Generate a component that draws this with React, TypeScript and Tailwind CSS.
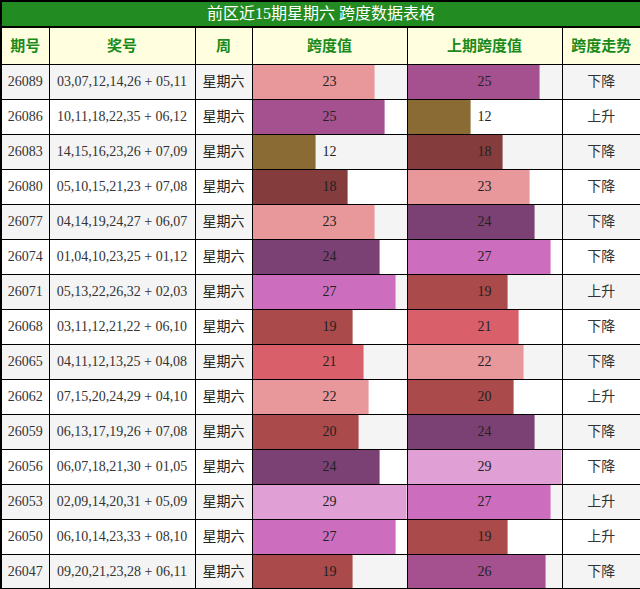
import React from "react";

const rows: [string, string, number, number, string][] = [
  ["26089", "03,07,12,14,26 + 05,11", 23, 25, "下降"],
  ["26086", "10,11,18,22,35 + 06,12", 25, 12, "上升"],
  ["26083", "14,15,16,23,26 + 07,09", 12, 18, "下降"],
  ["26080", "05,10,15,21,23 + 07,08", 18, 23, "下降"],
  ["26077", "04,14,19,24,27 + 06,07", 23, 24, "下降"],
  ["26074", "01,04,10,23,25 + 01,12", 24, 27, "下降"],
  ["26071", "05,13,22,26,32 + 02,03", 27, 19, "上升"],
  ["26068", "03,11,12,21,22 + 06,10", 19, 21, "下降"],
  ["26065", "04,11,12,13,25 + 04,08", 21, 22, "下降"],
  ["26062", "07,15,20,24,29 + 04,10", 22, 20, "上升"],
  ["26059", "06,13,17,19,26 + 07,08", 20, 24, "下降"],
  ["26056", "06,07,18,21,30 + 01,05", 24, 29, "下降"],
  ["26053", "02,09,14,20,31 + 05,09", 29, 27, "上升"],
  ["26050", "06,10,14,23,33 + 08,10", 27, 19, "上升"],
  ["26047", "09,20,21,23,28 + 06,11", 19, 26, "下降"],
];

const colors: Record<number, string> = {
  12: "#896b33",
  18: "#843c3c",
  19: "#aa4a4a",
  20: "#aa4a4a",
  21: "#d9606a",
  22: "#e8979b",
  23: "#e8979b",
  24: "#7b4174",
  25: "#a5518f",
  26: "#a5518f",
  27: "#cc6dbe",
  29: "#e0a0d6",
};

function Bar({ v }: { v: number }) {
  return (
    <td className="relative p-0 border border-black">
      <div
        className="absolute left-0 top-0 bottom-0 border-r border-white/40"
        style={{ width: `${(v / 29) * 100}%`, backgroundColor: colors[v] }}
      />
      <div className="relative text-center text-[14px] text-[#222]">{v}</div>
    </td>
  );
}

export default function App() {
  const font = { fontFamily: '"Liberation Serif", "Noto Sans CJK SC", serif' };
  return (
    <div className="w-[640px] bg-white" style={font}>
      <table className="w-[640px] table-fixed border-collapse border-2 border-black">
        <colgroup>
          <col className="w-[48px]" />
          <col className="w-[146px]" />
          <col className="w-[57px]" />
          <col className="w-[155px]" />
          <col className="w-[155px]" />
          <col className="w-[79px]" />
        </colgroup>
        <thead>
          <tr className="h-[26px]">
            <th
              colSpan={6}
              className="bg-[#228b22] text-white text-[16px] font-normal p-0 border-2 border-black leading-none"
            >
              前区近15期星期六 跨度数据表格
            </th>
          </tr>
          <tr className="h-[37px] bg-[#ffffe0]">
            {["期号", "奖号", "周", "跨度值", "上期跨度值", "跨度走势"].map((h) => (
              <th key={h} className="border border-black text-[#1a8a1a] text-[15px] font-bold p-0">
                {h}
              </th>
            ))}
          </tr>
        </thead>
        <tbody>
          {rows.map((r, i) => (
            <tr key={r[0]} className={`h-[35px] ${i % 2 === 0 ? "bg-[#f4f4f4]" : "bg-white"}`}>
              <td className="border border-black text-center text-[14px] text-[#333] p-0">{r[0]}</td>
              <td className="border border-black text-center text-[14px] text-[#333] p-0">{r[1]}</td>
              <td className="border border-black text-center text-[14px] text-[#222] p-0">星期六</td>
              <Bar v={r[2]} />
              <Bar v={r[3]} />
              <td className="border border-black text-center text-[14px] text-[#333] p-0">{r[4]}</td>
            </tr>
          ))}
        </tbody>
      </table>
    </div>
  );
}
